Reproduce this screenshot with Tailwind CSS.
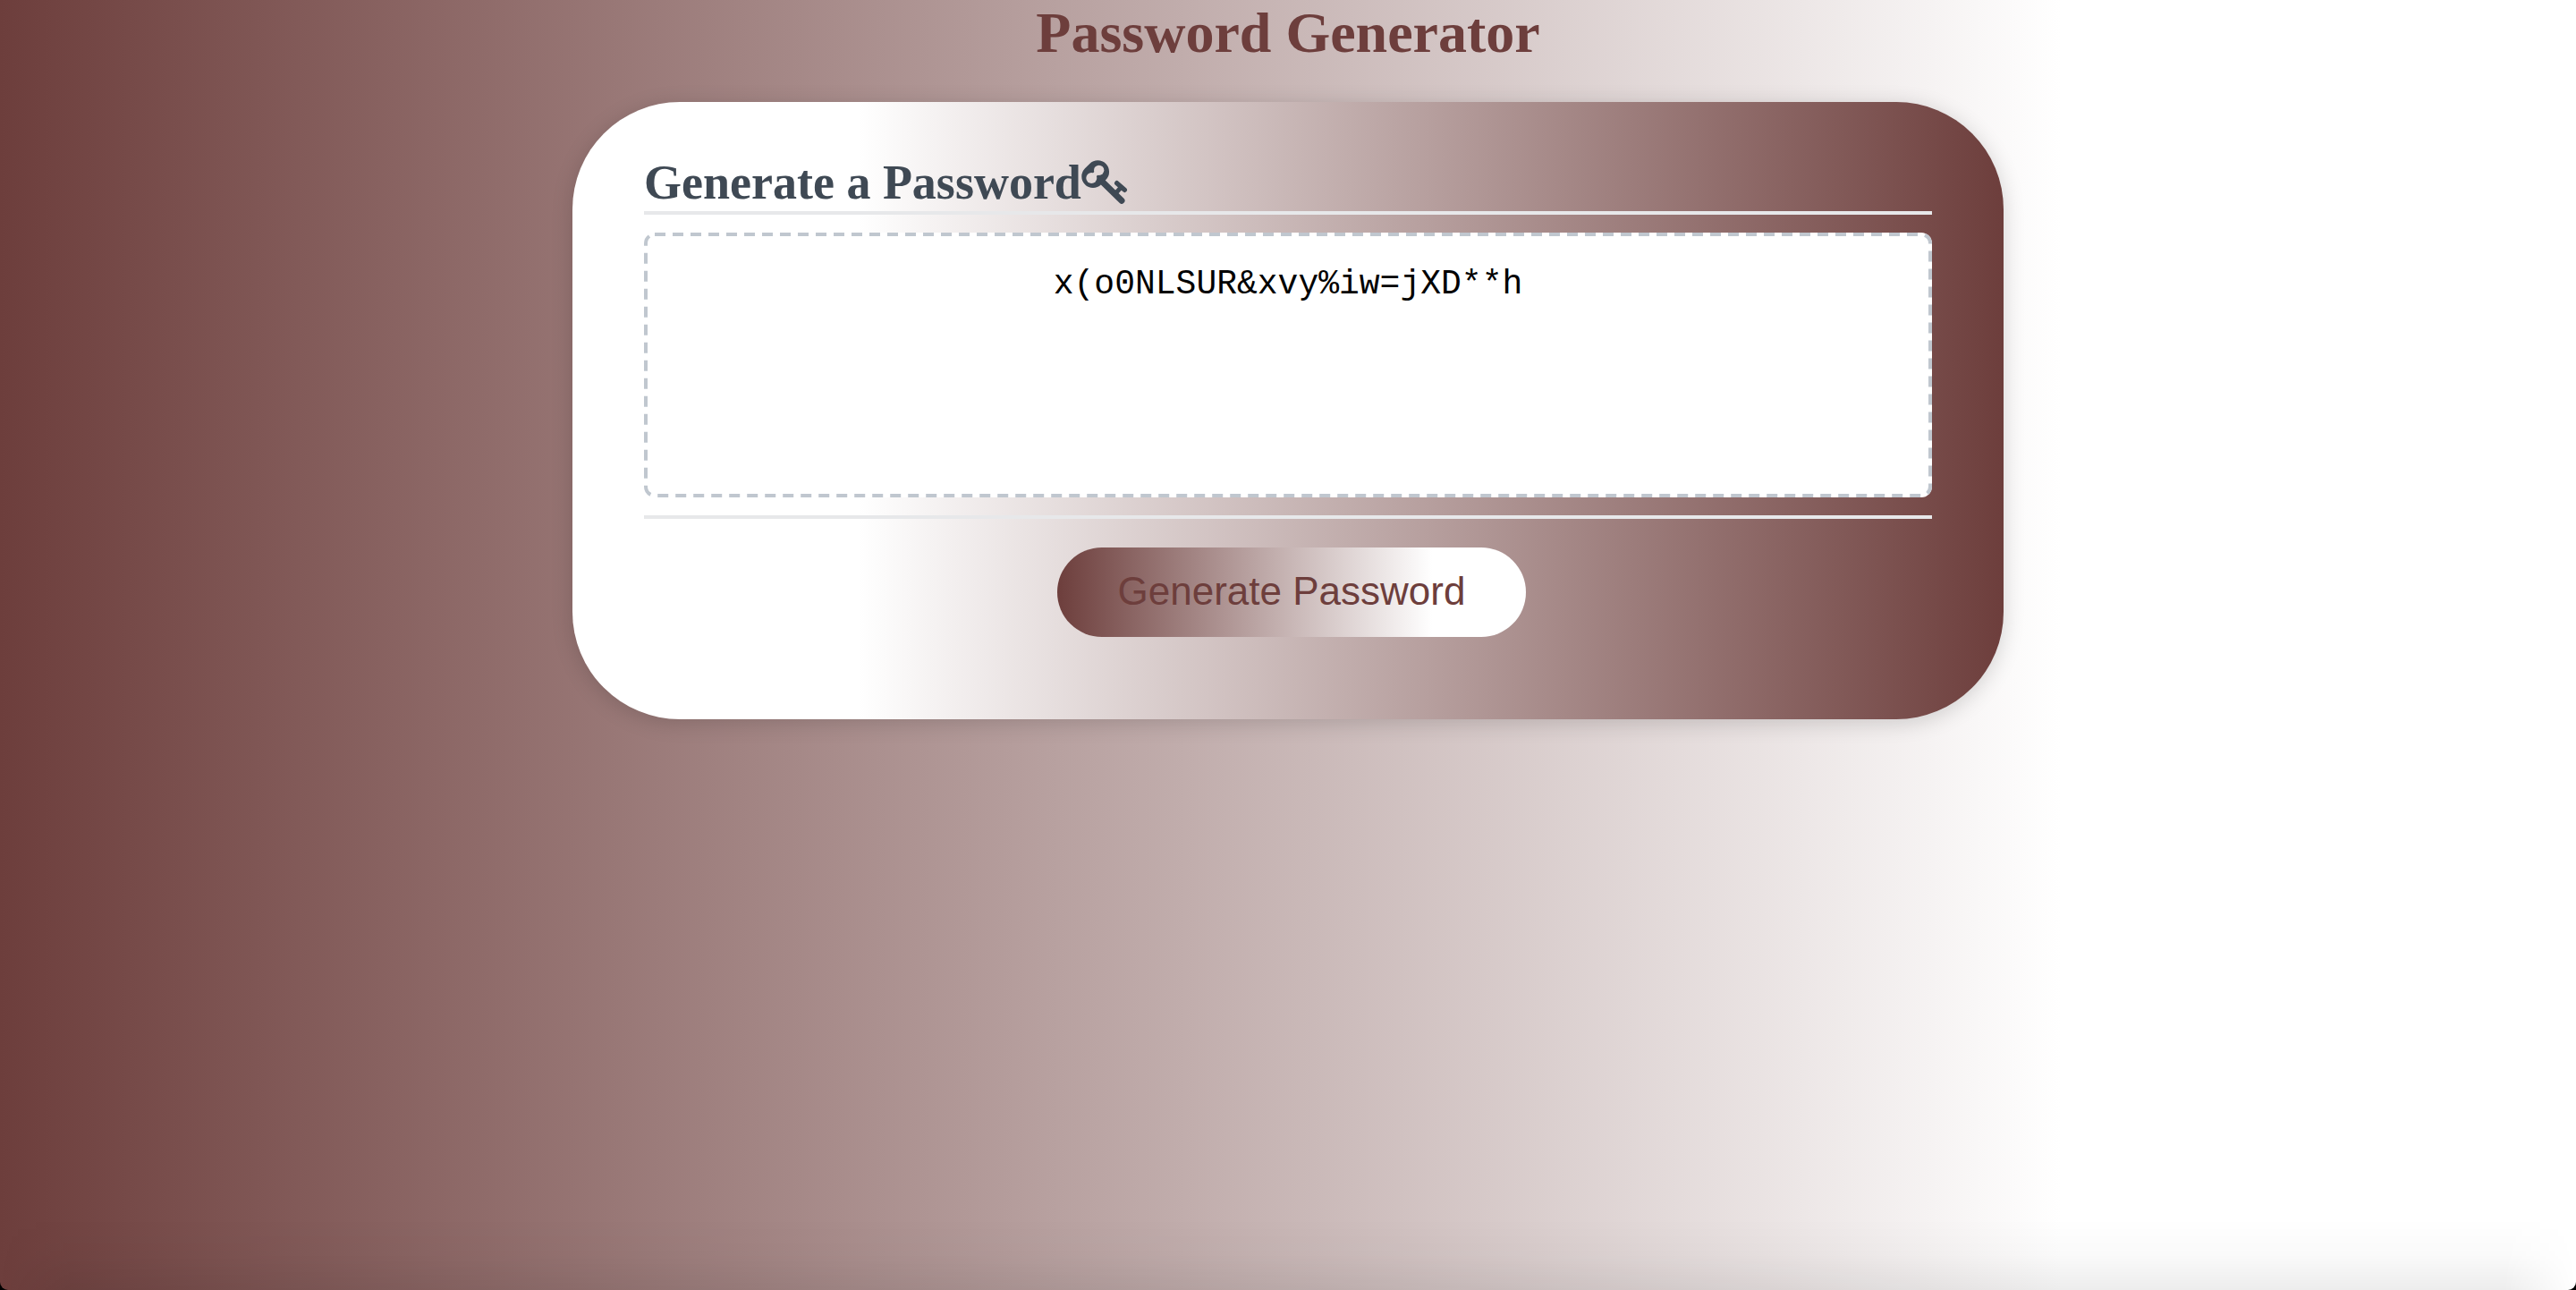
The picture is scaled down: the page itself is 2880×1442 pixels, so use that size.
<!DOCTYPE html>
<html lang="en">
<head>
<meta charset="utf-8">
<meta name="viewport" content="width=device-width, initial-scale=1">
<title>Password Generator</title>
<script src="https://cdn.jsdelivr.net/npm/@tailwindcss/browser@4"></script>
</head>
<body class="bg-black">
<div class="relative flex min-h-screen flex-col overflow-hidden rounded-b-[9px] bg-white bg-[linear-gradient(90deg,#6d3e3c_0%,#fff_80%)]">
  <header>
    <h1 class="mb-10 text-center font-['Liberation_Serif',serif] text-[64px] leading-[74px] font-bold text-[#6d3e3c]">Password Generator</h1>
  </header>
  <main class="mx-auto w-full max-w-[1600px] rounded-[120px] bg-white bg-[linear-gradient(270deg,#6d3e3c_0%,#fff_80%)] px-20 pt-[60px] pb-[92px] shadow-[0_4px_24px_rgba(0,0,0,0.16)]">
    <div class="border-b-4 border-[#e7e8ea] pb-0.5">
      <h2 class="flex items-start font-['Liberation_Serif',serif] text-[54px] leading-[60px] font-bold text-[#3f4954]">
        <label for="password">Generate a Password</label>
        <svg class="mt-1 h-[50px] w-[52px] shrink-0" viewBox="87 54 156 150" fill="none" aria-hidden="true">
          <!-- Hollow of the key's bow -->
          <mask id="bow" maskUnits="userSpaceOnUse" x="80" y="50" width="170" height="160">
            <rect x="80" y="50" width="170" height="160" fill="#fff"/>
            <circle cx="146" cy="91" r="17" fill="#000"/>
            <circle cx="121" cy="117" r="18" fill="#000"/>
            <path d="M146 91 121 117" stroke="#000" stroke-width="16"/>
          </mask>
          <path fill="currentColor" mask="url(#bow)" d="M115 69A38 38 0 0 1 169 123L153 139A38 38 0 0 1 99 85Z"/>
          <g stroke="currentColor" stroke-linecap="round">
            <path d="M156 128 222 193" stroke-width="21"/>
            <path d="M203 167 221 147" stroke-width="15" stroke-linecap="butt"/>
            <path d="M206 134 232 157" stroke-width="16"/>
          </g>
        </svg>
      </h2>
    </div>
    <div class="border-b-4 border-[#e7e8ea] py-5">
      <div class="relative">
        <textarea id="password" readonly spellcheck="false" class="block h-[296px] w-full resize-none overflow-hidden rounded-xl bg-white px-5 py-9 text-center font-['Liberation_Mono',monospace] text-[38px] leading-[43px] text-black outline-none">x(o0NLSUR&amp;xvy%iw=jXD**h</textarea>
        <!-- Dashed outline with long dashes -->
        <svg class="pointer-events-none absolute inset-0 h-full w-full" aria-hidden="true">
          <rect class="h-[calc(100%-4px)] w-[calc(100%-4px)]" x="2" y="2" rx="10" fill="none" stroke="#c0c7cf" stroke-width="4" stroke-dasharray="12 8"/>
        </svg>
      </div>
    </div>
    <div class="flex justify-center pt-8">
      <button type="button" class="ml-2 h-[100px] rounded-full bg-[linear-gradient(90deg,#6d3e3c_0%,#fff_80%)] px-[68px] pb-0.5 font-['Liberation_Sans',sans-serif] text-[44px] leading-[50px] text-[#6d3e3c]">Generate Password</button>
    </div>
  </main>
  <div class="pointer-events-none absolute inset-x-0 bottom-0 h-20 bg-[linear-gradient(to_top,rgba(0,0,0,0.07),rgba(0,0,0,0.02)_50%,transparent)] [mask-image:linear-gradient(to_right,transparent,black_80px,black_calc(100%-80px),transparent)]"></div>
</div>
</body>
</html>
